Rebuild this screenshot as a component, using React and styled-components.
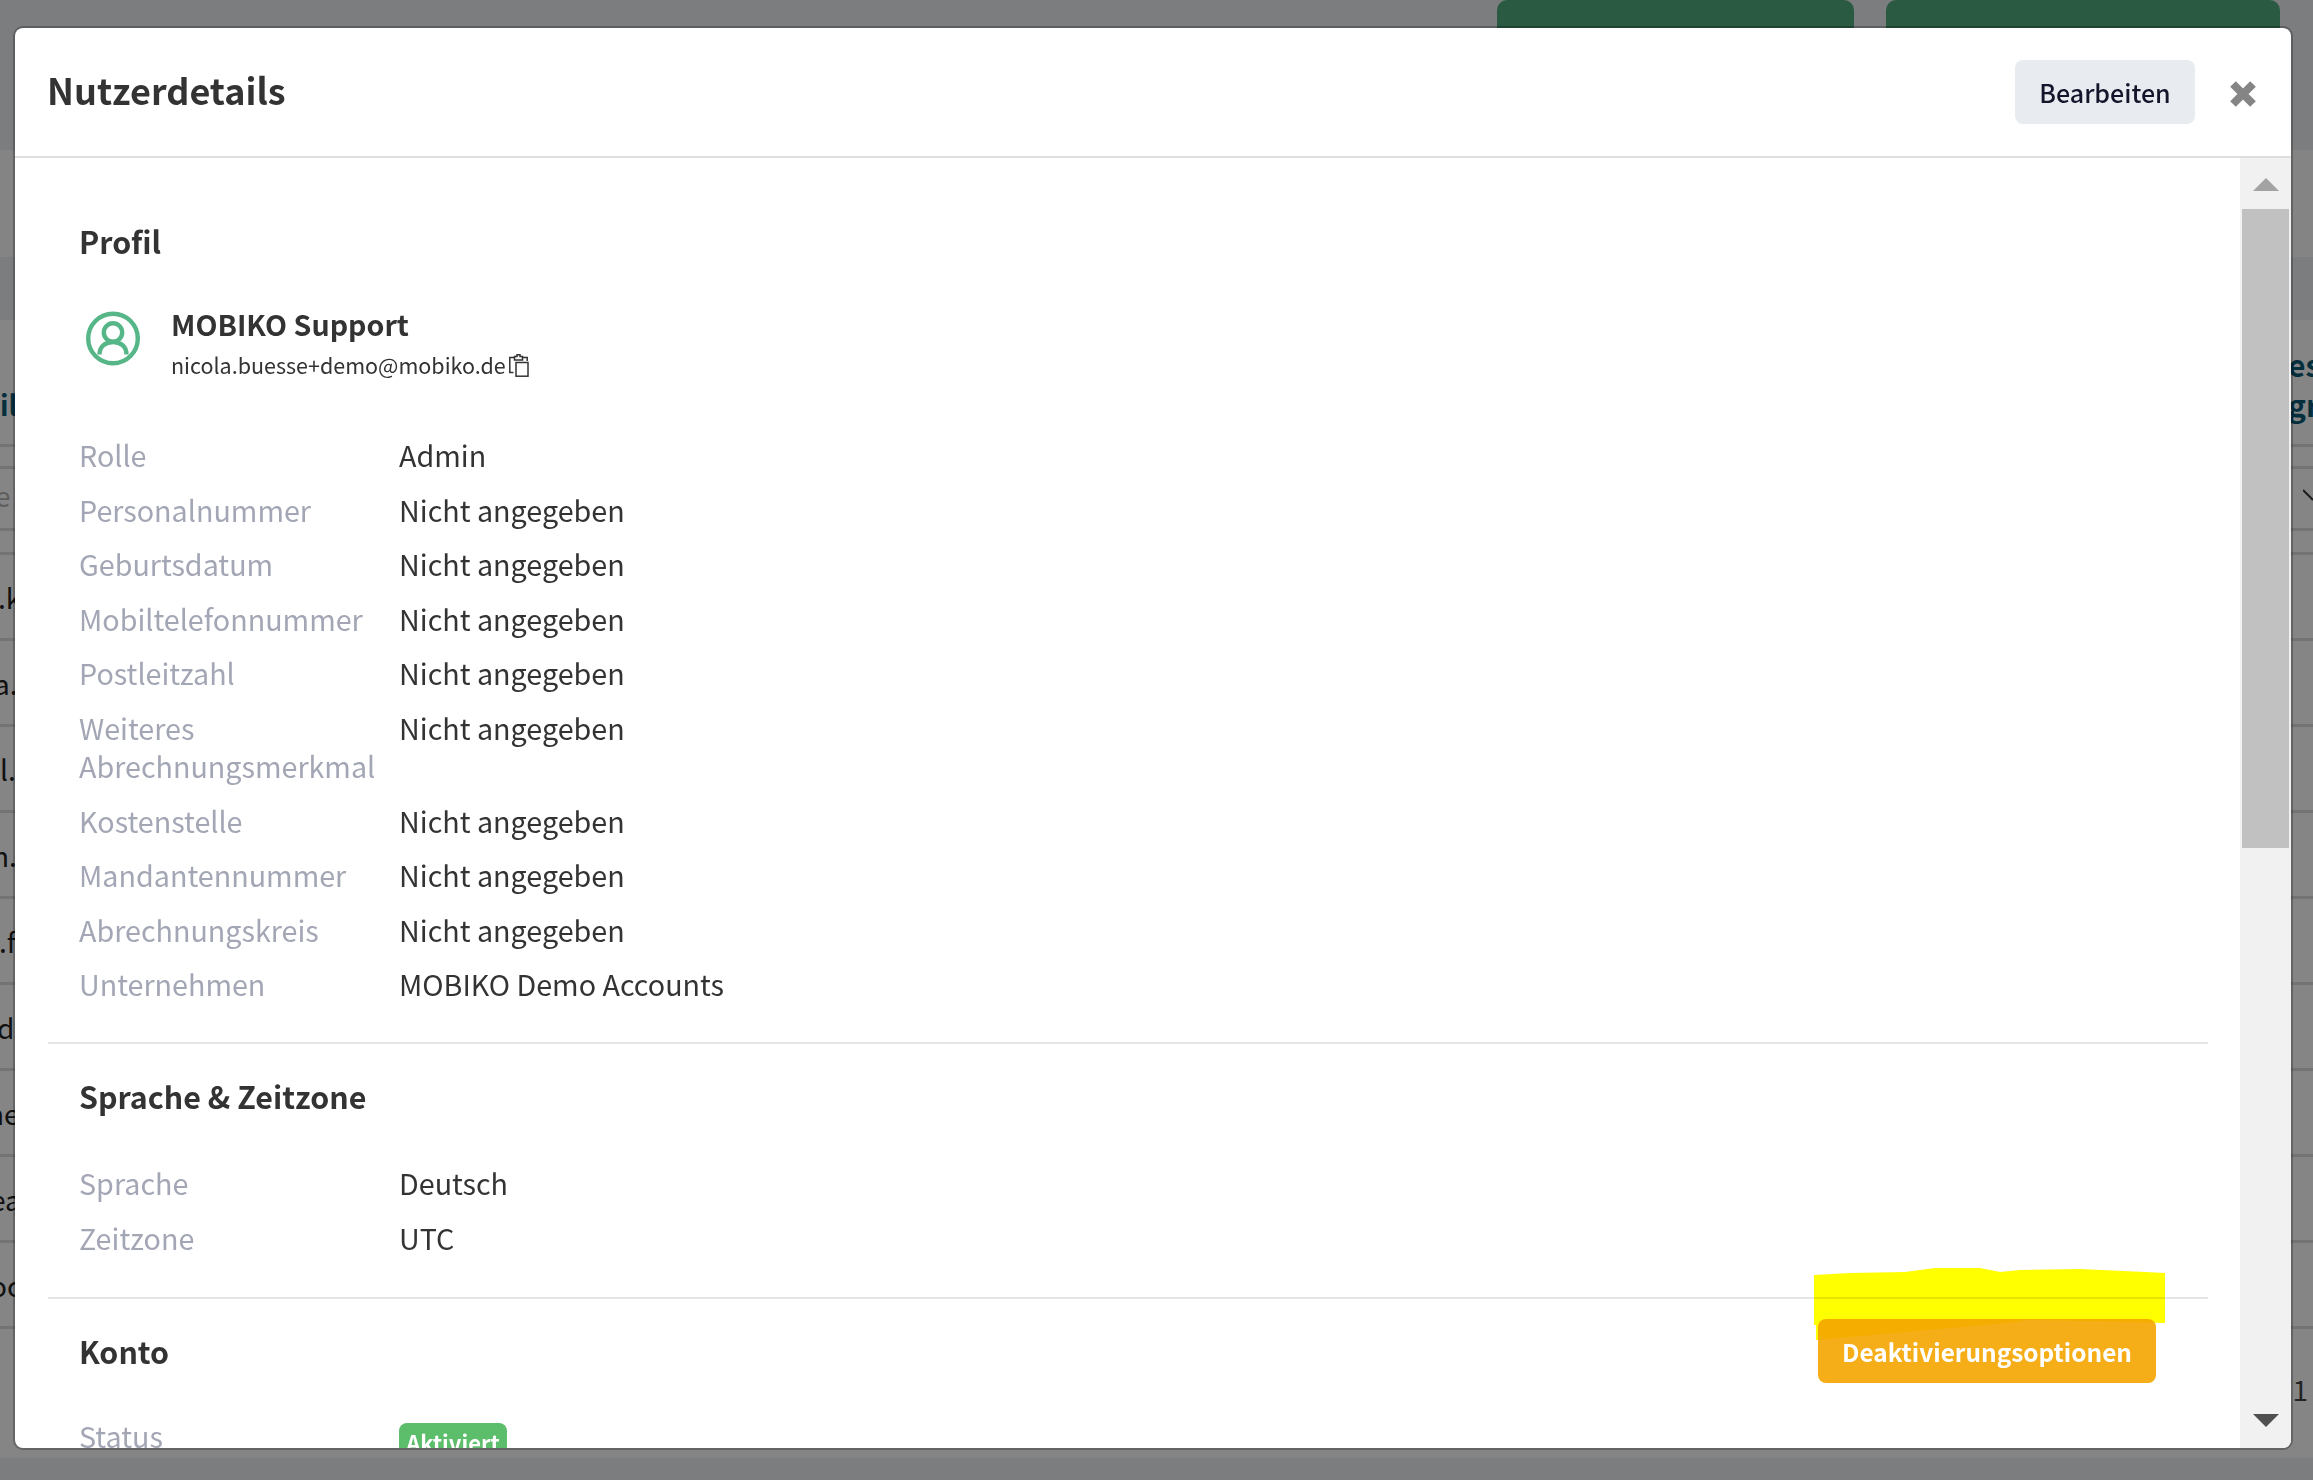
import React from "react"
import styled, { createGlobalStyle } from "styled-components"

const FONT = `"Noto Sans CJK SC", "Noto Sans", sans-serif`

const GlobalStyle = createGlobalStyle`
  html, body {
    margin: 0;
    padding: 0;
    overflow: hidden;
    background: #fff;
    font-family: ${FONT};
  }
`

const profileRows = [
  ["Rolle", "Admin"],
  ["Personalnummer", "Nicht angegeben"],
  ["Geburtsdatum", "Nicht angegeben"],
  ["Mobiltelefonnummer", "Nicht angegeben"],
  ["Postleitzahl", "Nicht angegeben"],
  ["Weiteres Abrechnungsmerkmal", "Nicht angegeben"],
  ["Kostenstelle", "Nicht angegeben"],
  ["Mandantennummer", "Nicht angegeben"],
  ["Abrechnungskreis", "Nicht angegeben"],
  ["Unternehmen", "MOBIKO Demo Accounts"],
]

const languageRows = [
  ["Sprache", "Deutsch"],
  ["Zeitzone", "UTC"],
]

// bits of the table behind the dialog, only the part left of the modal shows
const backRows = [
  { text: ".k", shift: -2 },
  { text: "a.", shift: -6 },
  { text: "l.", shift: 0 },
  { text: "n.", shift: -8 },
  { text: ".f", shift: -1 },
  { text: "d", shift: -3 },
  { text: "ne", shift: -13 },
  { text: "ea", shift: -10 },
  { text: "oc", shift: -10 },
]

function UserIcon() {
  return (
    <UserIconSvg width="54" height="55" viewBox="0 0 54 55" fill="none" stroke="#56b687" strokeWidth="4.4">
      <circle cx="27" cy="27.5" r="24.8" />
      <circle cx="27" cy="21.5" r="9.2" />
      <path d="M13.5 43.5C13.5 35 20 31 27 31S40.5 35 40.5 43.5" />
    </UserIconSvg>
  )
}

function ClipboardIcon() {
  return (
    <svg width="20" height="23" viewBox="0 0 20 23" fill="none" stroke="#333" strokeWidth="1.5">
      <path d="M4.5 18.5H.8V3.5H5M14 3.5h4.2V7" />
      <path d="M5.5 3.5V2.5H8V.8h3v1.7h2.5V6h-8z" />
      <rect x="7" y="8.5" width="12" height="13.7" />
    </svg>
  )
}

function CloseIcon() {
  return (
    <svg width="26" height="26" viewBox="0 0 26 26" stroke="#858585" strokeWidth="8">
      <path d="M3 3l20 20M23 3L3 23" />
    </svg>
  )
}

function Chevron() {
  return (
    <svg width="10" height="12" viewBox="0 0 10 12" fill="none" stroke="#3a3a3a" strokeWidth="2">
      <path d="M0 1l10 10" />
    </svg>
  )
}

function InfoRows({ rows, top }) {
  return (
    <InfoList $top={top}>
      {rows.map(([label, value]) => (
        <InfoRow key={label}>
          <InfoLabel>{label}</InfoLabel>
          <InfoValue>{value}</InfoValue>
        </InfoRow>
      ))}
    </InfoList>
  )
}

export default function App() {
  return (
    <>
      <GlobalStyle />
      <BackPage>
        <TopBar>
          <GreenButton $width={357} />
          <GreenButton $width={394} />
        </TopBar>
        <Band $height={107} $color="#fdfdfd" />
        <Band $height={63} $color="#eeeff2" />
        <HeadRow>
          <EdgeText $bold>il</EdgeText>
          <HeadRight>
            <span>ess</span>
            <span>gr</span>
          </HeadRight>
        </HeadRow>
        <ThinRow $height={22} />
        <FilterRow>
          <EdgeText $muted $shift={-5}>e</EdgeText>
          <Chevron />
        </FilterRow>
        <ThinRow $height={24} />
        {backRows.map((row) => (
          <BackRow key={row.text}>
            <EdgeText $shift={row.shift}>{row.text}</EdgeText>
          </BackRow>
        ))}
        <Pager>1</Pager>
        <BackFooter />
      </BackPage>
      <Overlay />
      <Modal>
        <ModalHeader>
          <ModalTitle>Nutzerdetails</ModalTitle>
          <EditButton>Bearbeiten</EditButton>
          <CloseButton>
            <CloseIcon />
          </CloseButton>
        </ModalHeader>
        <ModalBody>
          <Content>
            <ProfileSection>
              <SectionTitle>Profil</SectionTitle>
              <UserRow>
                <UserIcon />
                <UserText>
                  <UserName>MOBIKO Support</UserName>
                  <UserMail>
                    nicola.buesse+demo@mobiko.de
                    <ClipboardIcon />
                  </UserMail>
                </UserText>
              </UserRow>
              <InfoRows rows={profileRows} top={50} />
            </ProfileSection>
            <LanguageSection>
              <SectionTitle>Sprache &amp; Zeitzone</SectionTitle>
              <InfoRows rows={languageRows} top={46} />
            </LanguageSection>
            <AccountSection>
              <AccountHead>
                <SectionTitle>Konto</SectionTitle>
                <DeactivateButton>Deaktivierungsoptionen</DeactivateButton>
              </AccountHead>
              <InfoRow>
                <InfoLabel>Status</InfoLabel>
                <InfoValue>
                  <StatusBadge>Aktiviert</StatusBadge>
                </InfoValue>
              </InfoRow>
            </AccountSection>
          </Content>
          <ScrollTrack>
            <ArrowUp />
            <ScrollThumb />
            <ArrowDown />
          </ScrollTrack>
        </ModalBody>
        {/* marker stroke somebody drew over the screenshot */}
        <Highlight viewBox="0 0 380 90" width="380" height="90">
          <path
            d="M14 15L50 13L105 12L135 8L180 8L200 12L220 10L280 9L345 12L365 13L365 63L275 61L226 60L219 62L16 80L16 65L14 65Z"
            fill="#ffff00"
          />
        </Highlight>
      </Modal>
    </>
  )
}

const BackPage = styled.div`
  width: 2313px;
  height: 1480px;
  display: flex;
  flex-direction: column;
  background: #fff;
  overflow: hidden;
`

const TopBar = styled.div`
  height: 150px;
  flex: none;
  display: flex;
  justify-content: flex-end;
  align-items: flex-start;
  gap: 32px;
  padding-right: 33px;
  box-sizing: border-box;
  background: #eeeff2;
`

const GreenButton = styled.div`
  width: ${(p) => p.$width}px;
  height: 60px;
  border-radius: 10px;
  background: #53ad80;
`

const Band = styled.div`
  height: ${(p) => p.$height}px;
  flex: none;
  background: ${(p) => p.$color};
`

const HeadRow = styled.div`
  height: 127px;
  flex: none;
  display: flex;
  justify-content: space-between;
  align-items: flex-end;
  box-sizing: border-box;
  padding-bottom: 20px;
  border-bottom: 3px solid #dcdde2;
`

const HeadRight = styled.div`
  width: 25px;
  display: flex;
  flex-direction: column;
  font-size: 30px;
  font-weight: 700;
  line-height: 40px;
  color: #0c5a75;
  white-space: nowrap;
`

const EdgeText = styled.div`
  width: 40px;
  white-space: nowrap;
  overflow: hidden;
  font-size: 28px;
  text-indent: ${(p) => p.$shift || 0}px;
  font-weight: ${(p) => (p.$bold ? 700 : 400)};
  color: ${(p) => (p.$bold ? "#0c5a75" : p.$muted ? "#b5b5b5" : "#222")};
`

const ThinRow = styled.div`
  height: ${(p) => p.$height}px;
  flex: none;
  box-sizing: border-box;
  border-bottom: 3px solid #dcdde2;
`

const FilterRow = styled.div`
  height: 62px;
  flex: none;
  display: flex;
  justify-content: space-between;
  align-items: center;
  box-sizing: border-box;
  border-bottom: 3px solid #dcdde2;
  padding-bottom: 8px;
`

const BackRow = styled.div`
  height: 86px;
  flex: none;
  display: flex;
  align-items: center;
  box-sizing: border-box;
  border-bottom: 3px solid #dcdde2;
`

const Pager = styled.div`
  height: 129px;
  flex: none;
  box-sizing: border-box;
  padding: 40px 5px 0 0;
  text-align: right;
  font-size: 28px;
  line-height: 40px;
  color: #444;
`

const BackFooter = styled.div`
  flex: 1;
  background: #eeeff2;
`

const Overlay = styled.div`
  position: fixed;
  inset: 0;
  background: rgba(0, 0, 0, 0.48);
`

const Modal = styled.div`
  position: fixed;
  left: 15px;
  top: 28px;
  width: 2276px;
  height: 1420px;
  display: flex;
  flex-direction: column;
  overflow: hidden;
  background: #fff;
  border-radius: 8px;
  box-shadow: 0 0 0 2px rgba(0, 0, 0, 0.25);
  color: #333;
`

const ModalHeader = styled.header`
  height: 130px;
  flex: none;
  display: flex;
  align-items: center;
  box-sizing: border-box;
  padding: 0 35px 0 32px;
  border-bottom: 2px solid #dedede;
`

const ModalTitle = styled.h1`
  margin: 0 auto 6px 0;
  font-size: 36px;
  font-weight: 700;
  line-height: 48px;
  color: #333;
`

const EditButton = styled.button`
  width: 180px;
  height: 64px;
  border: 0;
  border-radius: 8px;
  background: #e8ebf0;
  font-family: ${FONT};
  font-size: 25px;
  font-weight: 500;
  color: #14142b;
`

const CloseButton = styled.div`
  display: flex;
  margin: 4px 0 0 35px;
`

const ModalBody = styled.div`
  flex: 1;
  min-height: 0;
  display: flex;
`

const Content = styled.div`
  flex: 1;
  min-width: 0;
  overflow: hidden;
  padding: 0 32px 0 33px;
`

const Section = styled.section`
  padding: 0 32px 0 31px;
`

const ProfileSection = styled(Section)`
  padding-top: 61px;
  padding-bottom: 38.5px;
  border-bottom: 2px solid #e5e5e5;
`

const LanguageSection = styled(Section)`
  padding-top: 30px;
  padding-bottom: 40px;
  border-bottom: 2px solid #e5e5e5;
`

const AccountSection = styled(Section)`
  padding-top: 20px;
`

const SectionTitle = styled.h2`
  margin: 0;
  font-size: 30.4px;
  font-weight: 700;
  line-height: 44px;
  color: #333;
`

const UserRow = styled.div`
  display: flex;
  align-items: flex-start;
  gap: 31px;
  margin: 41px 0 0 7px;
`

const UserIconSvg = styled.svg`
  flex: none;
  margin-top: 7px;
`

const UserText = styled.div`
  display: flex;
  flex-direction: column;
`

const UserName = styled.div`
  font-size: 28.6px;
  font-weight: 700;
  line-height: 40px;
`

const UserMail = styled.div`
  display: flex;
  align-items: center;
  gap: 3px;
  font-size: 21.5px;
  line-height: 42px;
`

const InfoList = styled.div`
  display: flex;
  flex-direction: column;
  gap: 16px;
  margin-top: ${(p) => p.$top}px;
`

const InfoRow = styled.div`
  display: flex;
  font-size: 28.7px;
  line-height: 38.5px;
`

const InfoLabel = styled.div`
  width: 320px;
  flex: none;
  padding-right: 10px;
  box-sizing: border-box;
  color: #a3a6b4;
`

const InfoValue = styled.div`
  color: #333;
`

const AccountHead = styled.div`
  display: flex;
  justify-content: space-between;
  align-items: center;
  padding-right: 20px;
  margin-bottom: 34px;
`

const DeactivateButton = styled.button`
  width: 338px;
  height: 64px;
  border: 0;
  border-radius: 8px;
  background: #f5ae17;
  font-family: ${FONT};
  font-size: 24.4px;
  font-weight: 700;
  color: #fff;
`

const StatusBadge = styled.span`
  display: block;
  width: 108px;
  margin-top: 6px;
  border-radius: 8px;
  background: #5cbd6b;
  font-size: 22px;
  font-weight: 700;
  line-height: 38px;
  text-align: center;
  color: #fff;
`

const ScrollTrack = styled.div`
  width: 51px;
  flex: none;
  display: flex;
  flex-direction: column;
  align-items: center;
  background: #f1f1f1;
`

const ArrowUp = styled.div`
  margin: 20px 0 18px;
  border-left: 13px solid transparent;
  border-right: 13px solid transparent;
  border-bottom: 13px solid #a3a3a3;
`

const ScrollThumb = styled.div`
  width: 47px;
  height: 639px;
  background: #c1c1c1;
`

const ArrowDown = styled.div`
  margin-top: auto;
  margin-bottom: 21px;
  border-left: 13px solid transparent;
  border-right: 13px solid transparent;
  border-top: 13px solid #505050;
`

const Highlight = styled.svg`
  position: absolute;
  left: 1785px;
  top: 1232px;
  mix-blend-mode: multiply;
`
